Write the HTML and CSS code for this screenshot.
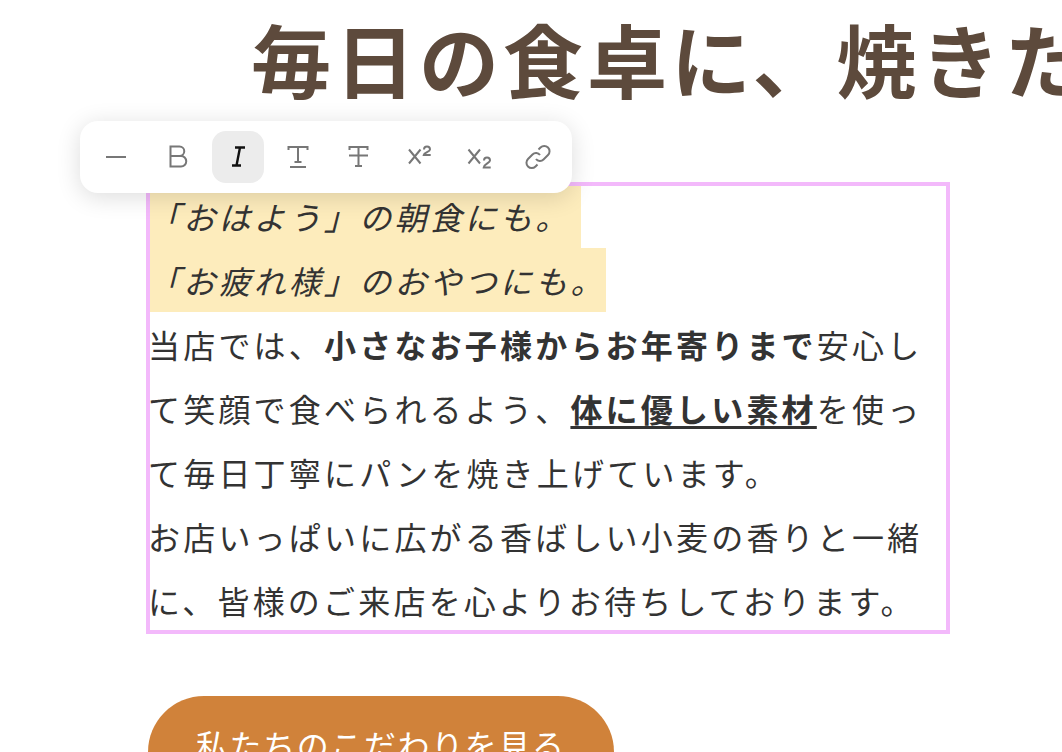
FILE: index.html
```html
<!DOCTYPE html>
<html lang="ja">
<head>
<meta charset="utf-8">
<title>パン屋</title>
<link rel="stylesheet" href="styles.css">
</head>
<body>
<main class="page">
  <h1 class="title">毎日の食卓に、焼きたての幸せを</h1>
  <div class="editor">
    <em class="hl">「おはよう」の朝食にも。&nbsp;</em>
    <em class="hl">「お疲れ様」のおやつにも。</em>
    <p class="para">当店では、<strong>小さなお子様からお年寄りまで</strong>安心して笑顔で食べられるよう、<strong class="ul">体に優しい素材</strong>を使って毎日丁寧にパンを焼き上げています。</p>
    <p class="para">お店いっぱいに広がる香ばしい小麦の香りと一緒に、皆様のご来店を心よりお待ちしております。</p>
  </div>
  <a class="cta">私たちのこだわりを見る</a>
</main>
<div class="toolbar">
  <button class="tb first"><svg viewBox="0 0 28 28"><path d="M4 14h20"/></svg></button>
  <button class="tb"><svg viewBox="0 0 28 28"><path d="M6.500 3.500h9a4.750 4.750 0 0 1 0 9.500h-9zM6.500 13h10.500a5.250 5.250 0 0 1 0 10.500H6.500z"/></svg></button>
  <button class="tb on"><svg viewBox="0 0 28 28"><path d="M11 4.500h10M8 22.500h9M16 4.500l-3.500 18"/></svg></button>
  <button class="tb"><svg viewBox="0 0 28 28"><path d="M4.500 7V4h19v3M14 4v15M10.500 19h7M6 24h16"/></svg></button>
  <button class="tb"><svg viewBox="0 0 28 28"><path d="M5.500 7V4h18v3M14.500 4v19M11 23h7M5 12.500h19"/></svg></button>
  <button class="tb"><svg viewBox="0 0 28 28"><path d="M5 6.500l11.500 14M16.500 6.500L5 20.500M20 6.500a3 3 0 0 1 6 0c0 2.200-6 3-6.300 5.500h7"/></svg></button>
  <button class="tb"><svg viewBox="0 0 28 28"><path d="M4.500 6.500L16 20.500M16 6.500L4.500 20.500M20 17.500a3 3 0 0 1 6 0c0 2.500-6 3.500-6.300 7h7"/></svg></button>
  <button class="tb"><svg viewBox="0 0 28 28"><path d="M12 16a5 5 0 0 0 7.500.5l4.500-4.500a5.300 5.300 0 0 0-7.500-7.500l-2 2M16 12a5 5 0 0 0-7.500-.5l-4.500 4.500a5.300 5.300 0 0 0 7.500 7.500l2-2"/></svg></button>
</div>
</body>
</html>
```
FILE: styles.css
```css
html, body { margin: 0; height: 752px; overflow: hidden; background: #fff; }
body { font-family: "Noto Sans CJK JP", "Noto Sans", sans-serif; color: #333; position: relative; }
.page { padding-left: 148px; }
.title { margin: -3px 0 69px 103px; font-size: 80px; line-height: 116px; letter-spacing: 4px; font-weight: 700; color: #5d4a3c; white-space: nowrap; height: 116px; padding-top: 2px; }
.editor { position: relative; width: 800px; font-size: 32px; line-height: 64px; letter-spacing: 3.2px; }
.editor::after { content: ""; position: absolute; inset: -2px; border: 4px solid #f3b9fb; pointer-events: none; }
.hl { display: block; width: fit-content; background: #fdecbc; font-style: italic; }
.para { margin: 0; }
.para strong { font-weight: 700; }
.ul { text-decoration: underline; text-underline-offset: 4px; text-decoration-thickness: 3px; }
.cta { display: inline-block; margin-top: 64px; padding: 20px 48px 36px; border-radius: 56px; background: #d0823a; color: #fff; font-size: 32px; line-height: 56px; letter-spacing: 1.6px; }
.toolbar { position: absolute; left: 80px; top: 121px; display: flex; gap: 8px; padding: 10px 8px 10px 10px; background: #fff; border-radius: 18px; box-shadow: 0 4px 24px rgba(0,0,0,.14); }
.tb { width: 52px; height: 52px; padding: 0; border: 0; background: none; border-radius: 14px; display: flex; align-items: center; justify-content: center; }
.tb.first { margin-right: 2px; }
.tb svg { width: 28px; height: 28px; fill: none; stroke: #777; stroke-width: 2; }
.tb.on { background: #ececec; }
.tb.on svg { stroke: #111; stroke-width: 2.4; }
```
